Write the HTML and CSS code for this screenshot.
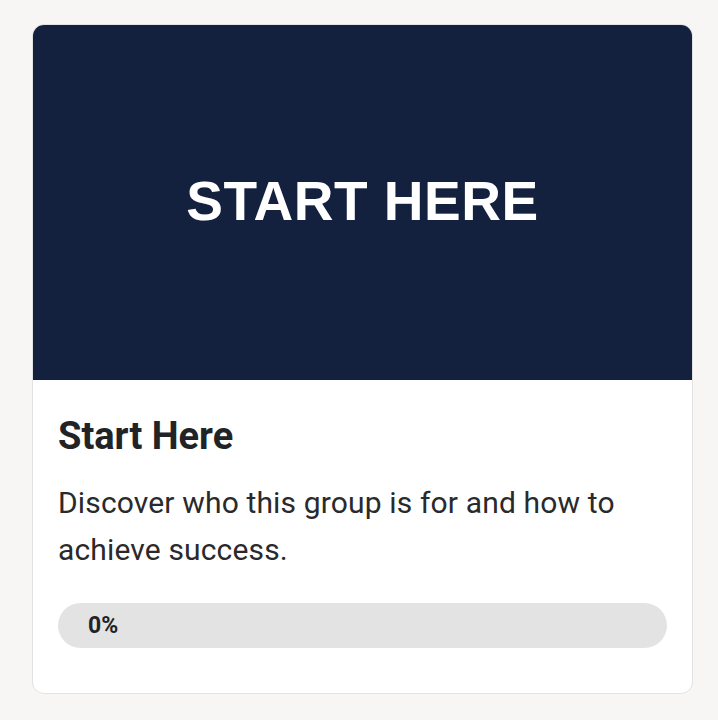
FILE: index.html
```html
<!DOCTYPE html>
<html>
<head>
<meta charset="utf-8">
<link rel="stylesheet" href="styles.css">
</head>
<body>
<div class="page">
  <div class="card">
    <div class="cover"><span class="cover-text">START HERE</span></div>
    <div class="body">
      <h2 class="title">Start Here</h2>
      <p class="desc">Discover who this group is for and how to achieve success.</p>
      <div class="progress"><span class="pct">0%</span></div>
    </div>
  </div>
</div>
</body>
</html>
```
FILE: styles.css
```css
html, body {
  margin: 0;
  padding: 0;
  background: #f7f6f4;
}
.page {
  padding: 24px 0 0 32px;
}
.card {
  width: 659px;
  background: #ffffff;
  border: 1px solid #e2e2e2;
  border-radius: 12px;
  overflow: hidden;
  font-family: Roboto, "Liberation Sans", sans-serif;
}
.cover {
  height: 355px;
  background: #13213f;
  display: flex;
  align-items: center;
  justify-content: center;
  padding-bottom: 3px;
  box-sizing: border-box;
}
.cover-text {
  font-family: "Liberation Sans", Arial, sans-serif;
  font-weight: 700;
  font-size: 55px;
  color: #ffffff;
  letter-spacing: 0.5px;
}
.body {
  padding: 34px 25px 45px 25px;
}
.title {
  margin: 0;
  font-size: 38px;
  font-weight: 700;
  color: #222326;
  line-height: 44px;
}
.desc {
  margin: 21px 0 0 0;
  font-size: 30px;
  line-height: 47px;
  letter-spacing: 0.15px;
  color: #2a2a2c;
}
.progress {
  margin-top: 30px;
  height: 45px;
  border-radius: 23px;
  background: #e3e3e3;
  display: flex;
  align-items: center;
  padding-left: 30px;
}
.pct {
  font-size: 23px;
  font-weight: 700;
  color: #222326;
}
```
